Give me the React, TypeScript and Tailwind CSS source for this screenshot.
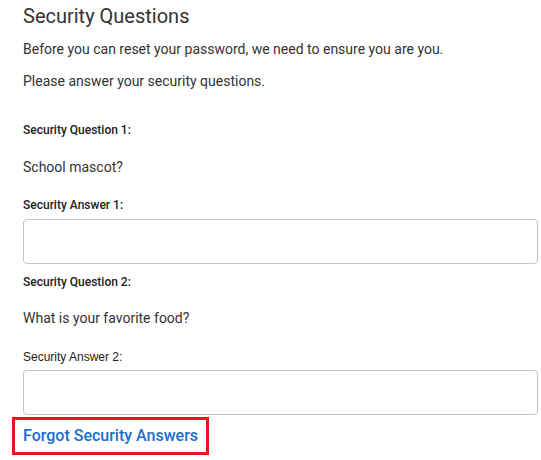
import React, { useState } from 'react';

const SecurityQuestions: React.FC = () => {
  const [answers, setAnswers] = useState({ answer1: '', answer2: '' });

  const handleChange = (e: React.ChangeEvent<HTMLInputElement>) => {
    setAnswers({ ...answers, [e.target.name]: e.target.value });
  };

  return (
    <div className="min-h-[460px] bg-white pl-[23px] pr-[3px] text-[#333333] font-['Roboto',sans-serif]">
      <h2 className="pt-[2px] text-[20px] leading-[28px] font-normal">Security Questions</h2>
      <p className="mt-[9px] text-[14px] leading-[20px]">
        Before you can reset your password, we need to ensure you are you.
      </p>
      <p className="mt-[12px] text-[14px] leading-[20px]">Please answer your security questions.</p>

      {/* Question 1 */}
      <label className="mt-[31px] block text-[12px] leading-[16px] font-medium text-[#222]">
        Security Question 1:
      </label>
      <p className="mt-[19px] text-[14px] leading-[20px]">School mascot?</p>
      <label className="mt-[20px] block text-[12px] leading-[16px] font-medium text-[#222]">
        Security Answer 1:
      </label>
      <input
        type="text"
        name="answer1"
        value={answers.answer1}
        onChange={handleChange}
        className="mt-[6px] block h-[45px] w-full rounded-[4px] border border-[#c4c4c4] px-3 text-[14px] outline-none"
      />

      {/* Question 2 */}
      <label className="mt-[10px] block text-[12px] leading-[16px] font-medium text-[#222]">
        Security Question 2:
      </label>
      <p className="mt-[18px] text-[14px] leading-[20px]">What is your favorite food?</p>
      <label className="mt-[21px] block font-['Liberation_Sans',Arial,sans-serif] text-[12px] leading-[16px] font-normal text-[#222]">
        Security Answer 2:
      </label>
      <input
        type="text"
        name="answer2"
        value={answers.answer2}
        onChange={handleChange}
        className="mt-[5px] block h-[45px] w-full rounded-[4px] border border-[#c4c4c4] px-3 text-[14px] outline-none"
      />

      <div className="-ml-[11px] mt-[2px] flex h-[38px] w-[197px] items-center border-[3px] border-[#e8131f] pl-[8px]">
        <a href="#" className="text-[16px] font-medium text-[#1a6dd1]">
          Forgot Security Answers
        </a>
      </div>
    </div>
  );
};

export default function App() {
  return <SecurityQuestions />;
}
